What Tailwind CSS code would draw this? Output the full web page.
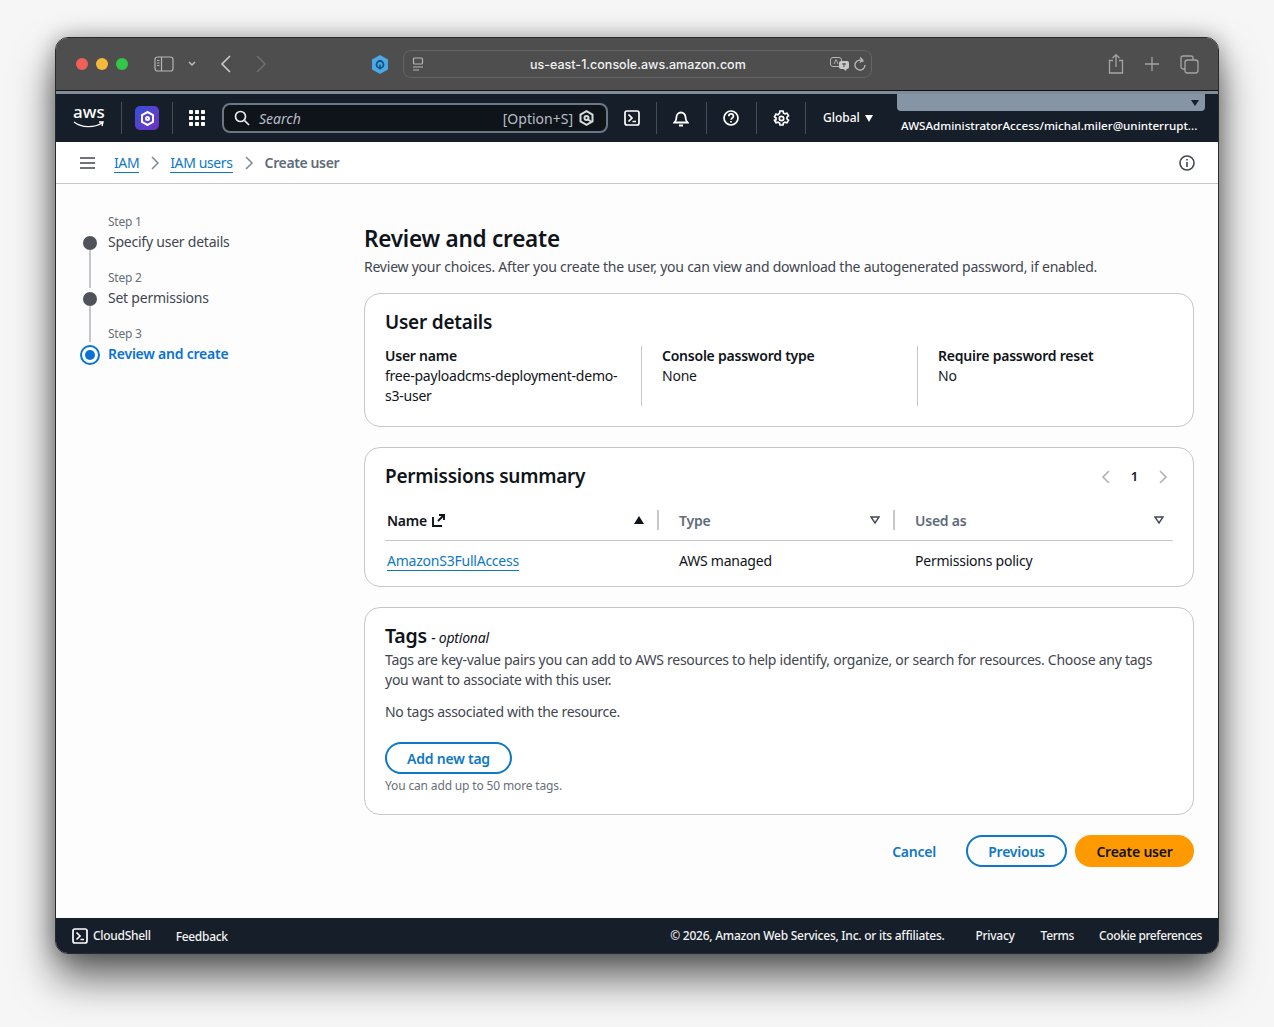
<!DOCTYPE html>
<html lang="en">
<head>
  <meta charset="UTF-8" />
  <title>Review and create</title>
  <script src="https://cdn.jsdelivr.net/npm/@tailwindcss/browser@4"></script>
</head>
<body class="bg-[#f6f6f6] h-[1027px] overflow-hidden pt-[37px] pl-[55px] font-['Noto_Sans',sans-serif] text-[14px] tracking-[-0.23px] text-[#16191f]">
  <div class="w-[1164px] h-[917px] rounded-[13px] overflow-hidden flex flex-col border border-[#2a2a2a] bg-white shadow-[0_24px_42px_rgba(0,0,0,0.6),0_0_22px_rgba(0,0,0,0.3)]">

    <!-- safari toolbar -->
    <div class="h-[53px] shrink-0 bg-[#4e4e4e] flex items-center pl-[20px] pr-[19px] border-b border-[#111] tracking-normal">
      <div class="flex gap-[8px]">
        <span class="w-[12px] h-[12px] rounded-full bg-[#f0605a]"></span>
        <span class="w-[12px] h-[12px] rounded-full bg-[#f6b83a]"></span>
        <span class="w-[12px] h-[12px] rounded-full bg-[#33c648]"></span>
      </div>
      <svg class="ml-[26px]" width="20" height="16" viewBox="0 0 20 16" fill="none" stroke="#b5b5b5" stroke-width="1.2"><rect x="1" y="1" width="18" height="14" rx="2.5"/><path d="M7.5 1v14M3 4.5h2.5M3 7h2.5M3 9.500h2.500"/></svg>
      <svg class="ml-[14px]" width="8" height="6" viewBox="0 0 8 6" fill="none" stroke="#bdbdbd" stroke-width="1.500"><path d="M1 1l3 3 3-3"/></svg>
      <svg class="ml-[24px]" width="12" height="18" viewBox="0 0 12 18" fill="none" stroke="#c8c8c8" stroke-width="1.700"><path d="M10 1L2 9l8 8"/></svg>
      <svg class="ml-[23px]" width="12" height="18" viewBox="0 0 12 18" fill="none" stroke="#6e6e6e" stroke-width="1.700"><path d="M2 1l8 8-8 8"/></svg>
      <svg class="ml-[105px]" width="16" height="19" viewBox="0 0 16 19"><path d="M8 0l8 4.500v10L8 19l-8-4.500v-10z" fill="#4ba9e6"/><circle cx="8" cy="9.500" r="3.500" fill="none" stroke="#12507f" stroke-width="1.800"/><path d="M8 9.500v5" stroke="#12507f" stroke-width="1.500"/></svg>
      <div class="ml-[15px] w-[469px] h-[28px] rounded-[8px] border border-[#656565] flex items-center pl-[8px] pr-[5px] text-[#f2f2f2]">
        <svg width="12" height="15" viewBox="0 0 12 15" fill="none" stroke="#b5b5b5" stroke-width="1.200"><rect x="1.500" y="1" width="9" height="6" rx="1"/><path d="M1 10h10M1 13h6"/></svg>
        <span class="ml-[106px] w-[300px] text-[12.500px] font-['Inter',sans-serif] font-medium mt-[2px]">us-east-1.console.aws.amazon.com</span>
        <svg class="ml-auto" width="20" height="14" viewBox="0 0 20 14"><rect x="0.500" y="0.500" width="11" height="9" rx="2.500" fill="none" stroke="#b5b5b5"/><path d="M4 7l2-4.500L8 7" fill="none" stroke="#b5b5b5" stroke-width="0.900"/><path d="M11 4h6a2 2 0 0 1 2 2v4a2 2 0 0 1-2 2h-.500l-.500 2-2.500-2H11a2 2 0 0 1-2-2V6a2 2 0 0 1 2-2z" fill="#c8c8c8"/><path d="M12 7h4M14 6v4" stroke="#4e4e4e"/></svg>
        <svg class="ml-[4px]" width="12" height="14" viewBox="0 0 12 14" fill="none" stroke="#bdbdbd" stroke-width="1.300"><path d="M9.500 4.500A5 5 0 1 0 11 8M6 0.500l2.500 2.500L6 5.500"/></svg>
      </div>
      <svg class="ml-auto" width="16" height="20" viewBox="0 0 16 20" fill="none" stroke="#a5a5a5" stroke-width="1.300"><path d="M5 6.500H1.500v12.500h13V6.500H11M8 13V1M4.500 4L8 0.800 11.500 4"/></svg>
      <svg class="ml-[21px]" width="14" height="14" viewBox="0 0 14 14" fill="none" stroke="#a5a5a5" stroke-width="1.300"><path d="M7 0v14M0 7h14"/></svg>
      <svg class="ml-[21px]" width="19" height="19" viewBox="0 0 19 19" fill="none" stroke="#a5a5a5" stroke-width="1.300"><rect x="5" y="5" width="13" height="13" rx="2.500"/><path d="M5 14H3a2 2 0 0 1-2-2V3a2 2 0 0 1 2-2h8a2 2 0 0 1 2 2v2"/></svg>
    </div>
    <div class="h-[3px] shrink-0 bg-[#7f8c99]"></div>

    <!-- aws console nav -->
    <div class="h-[48px] shrink-0 bg-[#161e29] flex items-center text-white tracking-normal">
      <div class="w-[65px] pl-[17px] shrink-0 flex flex-col items-start leading-none">
        <span class="text-[17px] font-medium -mt-[4px] h-[17px]">aws</span>
        <svg class="mt-[1px]" width="32" height="8" viewBox="0 0 32 8" fill="none" stroke="#fff" stroke-width="1.400"><path d="M1 1c8 6 20 6 28 1M26 1l4 0-1 4"/></svg>
      </div>
      <span class="w-px h-[32px] bg-[#414d5c]"></span>
      <div class="ml-[13px] w-[24px] h-[24px] rounded-[5px] bg-gradient-to-br from-[#2f50d8] to-[#6d2fc0] flex items-center justify-center">
        <svg width="13" height="15" viewBox="0 0 13 15" fill="none" stroke="#fff" stroke-width="2"><path d="M6.500 1l5.500 3v7l-5.500 3L1 11V4z"/><circle cx="6.500" cy="7.500" r="1.500"/></svg>
      </div>
      <span class="ml-[13px] w-px h-[32px] bg-[#414d5c]"></span>
      <svg class="ml-[16px]" width="16" height="16" viewBox="0 0 16 16" fill="#fff"><rect width="4" height="4" rx="0.800"/><rect x="6" width="4" height="4" rx="0.800"/><rect x="12" width="4" height="4" rx="0.800"/><rect y="6" width="4" height="4" rx="0.800"/><rect x="6" y="6" width="4" height="4" rx="0.800"/><rect x="12" y="6" width="4" height="4" rx="0.800"/><rect y="12" width="4" height="4" rx="0.800"/><rect x="6" y="12" width="4" height="4" rx="0.800"/><rect x="12" y="12" width="4" height="4" rx="0.800"/></svg>
      <div class="ml-[17px] w-[386px] h-[30px] rounded-[8px] border-2 border-[#6b7785] bg-[#0f141a] flex items-center pl-[10px] pr-[12px]">
        <svg width="16" height="16" viewBox="0 0 16 16" fill="none" stroke="#e9ebed" stroke-width="1.700"><circle cx="6.500" cy="6.500" r="5"/><path d="M10.500 10.500L15 15"/></svg>
        <span class="ml-[9px] italic text-[#b6bec9] text-[14px]">Search</span>
        <span class="ml-auto text-[14px] text-[#b6bec9]">[Option+S]</span>
        <svg class="ml-[6px]" width="15" height="16" viewBox="0 0 15 16" fill="none" stroke="#d5dbdb" stroke-width="2"><path d="M7.500 1.200l6 3.300v7l-6 3.300-6-3.300v-7z"/><circle cx="7.500" cy="8" r="2"/><path d="M9 9.500l3 2"/></svg>
      </div>
      <svg class="ml-[16px]" width="16" height="16" viewBox="0 0 16 16" fill="none" stroke="#fff" stroke-width="1.700"><rect x="1" y="1" width="14" height="14" rx="2"/><path d="M4.500 4.500L8 8l-3.500 3.500M8.500 11.500H12"/></svg>
      <span class="ml-[16px] w-px h-[32px] bg-[#414d5c]"></span>
      <svg class="ml-[16px]" width="16" height="17" viewBox="0 0 16 17" fill="none" stroke="#fff" stroke-width="1.800"><path d="M1.500 12.500h13c-1.500-1.500-2-2.500-2-5.500a4.500 4.500 0 0 0-9 0c0 3-.5 4-2 5.500zM6 15.500h4"/></svg>
      <span class="ml-[17px] w-px h-[32px] bg-[#414d5c]"></span>
      <svg class="ml-[16px]" width="16" height="16" viewBox="0 0 16 16" fill="none" stroke="#fff" stroke-width="1.700"><circle cx="8" cy="8" r="7"/><path d="M5.800 6.200c0-3 4.600-3 4.600 0 0 1.800-2.300 1.800-2.300 3.600M8 11v1.500"/></svg>
      <span class="ml-[17px] w-px h-[32px] bg-[#414d5c]"></span>
      <svg class="ml-[16px]" width="17" height="17" viewBox="0 0 17 17" fill="none" stroke="#fff" stroke-width="1.700"><circle cx="8.500" cy="8.500" r="2.200"/><path d="M7 1h3l.4 2 1.600.9 2-.7 1.500 2.600-1.500 1.300v1.800l1.500 1.300-1.500 2.600-2-.7-1.600.9-.4 2H7l-.4-2-1.600-.9-2 .7-1.500-2.600L3 9.800V8L1.500 6.700 3 4.100l2 .7L6.600 3z"/></svg>
      <span class="ml-[15px] w-px h-[32px] bg-[#414d5c]"></span>
      <span class="ml-[17px] w-[38px] text-[12px] font-medium leading-none">Global</span>
      <svg class="ml-[4px]" width="8" height="7" viewBox="0 0 8 7" fill="#fff"><path d="M0 0h8L4 7z"/></svg>
      <div class="ml-[24px] w-[308px] h-[48px] flex flex-col">
        <div class="h-[17px] bg-[#8695a5] rounded-b-[4px] flex items-center justify-end pr-[6px]">
          <svg width="8" height="6" viewBox="0 0 8 6" fill="#161e29"><path d="M0 0h8L4 6z"/></svg>
        </div>
        <span class="mt-[9px] pl-[4px] text-[11.600px] font-medium leading-none whitespace-nowrap">AWSAdministratorAccess/michal.miler@uninterrupt...</span>
      </div>
    </div>

    <!-- breadcrumbs -->
    <div class="h-[42px] shrink-0 border-b border-[#c6c6cd] flex items-center pl-[24px] pr-[23px] tracking-[-0.38px]">
      <svg width="15" height="12" viewBox="0 0 15 12" stroke="#424650" stroke-width="1.700"><path d="M0 1h15M0 6h15M0 11h15"/></svg>
      <a class="ml-[19px] text-[#0f78c4] border-b border-[#0f78c4] leading-[19px]">IAM</a>
      <svg class="ml-[12px]" width="9" height="14" viewBox="0 0 9 14" fill="none" stroke="#7d8998" stroke-width="1.500"><path d="M1 1l6 6-6 6"/></svg>
      <a class="ml-[10px] text-[#0f78c4] border-b border-[#0f78c4] leading-[19px]">IAM users</a>
      <svg class="ml-[12px]" width="9" height="14" viewBox="0 0 9 14" fill="none" stroke="#7d8998" stroke-width="1.500"><path d="M1 1l6 6-6 6"/></svg>
      <span class="ml-[11px] text-[#5f6b7a] font-semibold">Create user</span>
      <svg class="ml-auto" width="16" height="16" viewBox="0 0 16 16" fill="none" stroke="#424650" stroke-width="1.600"><circle cx="8" cy="8" r="7"/><path d="M8 7v5M8 4v1.600"/></svg>
    </div>

    <!-- main -->
    <div class="flex-1 bg-[#fdfdfd] flex min-h-0">
      <!-- wizard steps -->
      <div class="w-[308px] shrink-0 pl-[24px] pt-[30px]">
        <div class="relative pl-[28px] h-[56px]">
          <div class="text-[12px] leading-[16px] text-[#687078]">Step 1</div>
          <div class="leading-[24px] text-[#424650]">Specify user details</div>
          <span class="absolute left-[3px] top-[22px] w-[14px] h-[14px] rounded-full bg-[#4f5359]"></span>
          <span class="absolute left-[9px] top-[36px] w-[2px] h-[38px] bg-[#c6c6cd]"></span>
        </div>
        <div class="relative pl-[28px] h-[56px]">
          <div class="text-[12px] leading-[16px] text-[#687078]">Step 2</div>
          <div class="leading-[24px] text-[#424650]">Set permissions</div>
          <span class="absolute left-[3px] top-[22px] w-[14px] h-[14px] rounded-full bg-[#4f5359]"></span>
          <span class="absolute left-[9px] top-[36px] w-[2px] h-[36px] bg-[#c6c6cd]"></span>
        </div>
        <div class="relative pl-[28px]">
          <div class="text-[12px] leading-[16px] text-[#687078]">Step 3</div>
          <div class="leading-[24px] text-[#0972d3] font-semibold">Review and create</div>
          <span class="absolute left-0 top-[19px] w-[20px] h-[20px] rounded-full border-2 border-[#0972d3] flex items-center justify-center"><span class="w-[10px] h-[10px] rounded-full bg-[#0972d3]"></span></span>
        </div>
      </div>

      <!-- content -->
      <div class="w-[830px] pt-[40px]">
        <h1 class="text-[22.500px] leading-[30px] font-semibold text-[#0f141a]">Review and create</h1>
        <p class="mt-[3px] leading-[20px] text-[#424650]">Review your choices. After you create the user, you can view and download the autogenerated password, if enabled.</p>

        <section class="mt-[16px] h-[134px] rounded-[16px] border border-[#c6c6cd] bg-white px-[20px] pt-[14px]">
          <h2 class="text-[19px] leading-[28px] font-semibold text-[#0f141a]">User details</h2>
          <div class="mt-[10px] flex">
            <div class="w-[257px] h-[60px] pr-[16px] border-r border-[#c6c6cd]">
              <div class="font-semibold leading-[20px] text-[#0f141a]">User name</div>
              <div class="leading-[20px] text-[#0f141a]">free-payloadcms-deployment-demo-s3-user</div>
            </div>
            <div class="w-[276px] h-[60px] pl-[20px] border-r border-[#c6c6cd]">
              <div class="font-semibold leading-[20px] text-[#0f141a]">Console password type</div>
              <div class="leading-[20px]">None</div>
            </div>
            <div class="pl-[20px]">
              <div class="font-semibold leading-[20px] text-[#0f141a]">Require password reset</div>
              <div class="leading-[20px]">No</div>
            </div>
          </div>
        </section>

        <section class="mt-[20px] h-[140px] rounded-[16px] border border-[#c6c6cd] bg-white pl-[20px] pr-[20px] pt-[14px]">
          <div class="flex items-center justify-between h-[28px]">
            <h2 class="text-[19px] leading-[28px] font-semibold text-[#0f141a]">Permissions summary</h2>
            <div class="flex items-center pr-[5px] mt-[2px]">
              <svg width="10" height="14" viewBox="0 0 10 14" fill="none" stroke="#b4b4bb" stroke-width="1.700"><path d="M8 1L2 7l6 6"/></svg>
              <span class="ml-[20px] font-semibold text-[13px]">1</span>
              <svg class="ml-[20px]" width="10" height="14" viewBox="0 0 10 14" fill="none" stroke="#b4b4bb" stroke-width="1.700"><path d="M2 1l6 6-6 6"/></svg>
            </div>
          </div>
          <div class="mt-[20px] h-[31px] flex items-start border-b border-[#c6c6cd] font-semibold">
            <div class="w-[274px] h-[20px] pl-[2px] flex items-center text-[#0f141a]">
              <span>Name</span>
              <svg class="ml-[5px]" width="13" height="13" viewBox="0 0 13 13" fill="none" stroke="#0f141a" stroke-width="1.900"><path d="M1 3v9h9M6 7l6-6M7 1h5v5"/></svg>
              <svg class="ml-auto mr-[13px]" width="10" height="8" viewBox="0 0 10 8" fill="#0f141a"><path d="M5 0l5 8H0z"/></svg>
              <span class="w-[2px] h-[20px] bg-[#c6c6cd]"></span>
            </div>
            <div class="w-[236px] h-[20px] pl-[20px] flex items-center text-[#5f6b7a]">
              <span>Type</span>
              <svg class="ml-auto mr-[13px]" width="10" height="8" viewBox="0 0 10 8" fill="none" stroke="#424650" stroke-width="1.400"><path d="M1 1h8L5 7z"/></svg>
              <span class="w-[2px] h-[20px] bg-[#c6c6cd]"></span>
            </div>
            <div class="flex-1 h-[20px] pl-[20px] pr-[9px] flex items-center text-[#5f6b7a]">
              <span>Used as</span>
              <svg class="ml-auto" width="10" height="8" viewBox="0 0 10 8" fill="none" stroke="#424650" stroke-width="1.400"><path d="M1 1h8L5 7z"/></svg>
            </div>
          </div>
          <div class="flex mt-[10px] leading-[20px] text-[#0f141a]">
            <div class="w-[274px] pl-[2px]"><a class="text-[#0f78c4] border-b border-[#0f78c4]">AmazonS3FullAccess</a></div>
            <div class="w-[236px] pl-[20px]">AWS managed</div>
            <div class="pl-[20px]">Permissions policy</div>
          </div>
        </section>

        <section class="mt-[20px] h-[208px] rounded-[16px] border border-[#c6c6cd] bg-white px-[20px] pt-[14px]">
          <h2 class="leading-[28px] text-[#0f141a]"><span class="text-[19.500px] font-semibold">Tags</span> <span class="italic ml-[1px]">- optional</span></h2>
          <p class="-mt-[2px] leading-[20px] text-[#424650] w-[780px] tracking-[-0.26px]">Tags are key-value pairs you can add to AWS resources to help identify, organize, or search for resources. Choose any tags you want to associate with this user.</p>
          <p class="mt-[12px] leading-[20px] text-[#424650] tracking-[-0.3px]">No tags associated with the resource.</p>
          <button class="mt-[20px] block h-[32px] w-[127px] rounded-full border-2 border-[#0f78c4] text-[#0f78c4] font-semibold">Add new tag</button>
          <p class="mt-[4px] text-[12px] leading-[16px] text-[#687078] tracking-[-0.15px]">You can add up to 50 more tags.</p>
        </section>

        <div class="mt-[20px] flex items-center justify-end">
          <a class="text-[#0f78c4] font-semibold mr-[30px]">Cancel</a>
          <button class="h-[32px] w-[101px] rounded-full border-2 border-[#0f78c4] text-[#0f78c4] font-semibold">Previous</button>
          <button class="ml-[8px] h-[32px] w-[119px] rounded-full bg-[#ff9900] text-[#0f141a] font-semibold">Create user</button>
        </div>
      </div>
    </div>

    <!-- footer -->
    <div class="h-[35px] shrink-0 bg-[#161e29] flex items-center pl-[16px] pr-[16px] text-[12px] font-medium tracking-[-0.3px] text-[#f2f3f3]">
      <svg width="16" height="16" viewBox="0 0 16 16" fill="none" stroke="#fff" stroke-width="1.700"><rect x="1" y="1" width="14" height="14" rx="2"/><path d="M4.500 4.500L8 8l-3.500 3.500M8.500 11.500H12"/></svg>
      <span class="ml-[5px]">CloudShell</span>
      <span class="ml-[25px] mt-[2px]">Feedback</span>
      <span class="ml-auto tracking-[-0.25px]">© 2026, Amazon Web Services, Inc. or its affiliates.</span>
      <span class="ml-[31px]">Privacy</span>
      <span class="ml-[26px]">Terms</span>
      <span class="ml-[25px] tracking-[-0.42px]">Cookie preferences</span>
    </div>
  </div>
</body>
</html>
